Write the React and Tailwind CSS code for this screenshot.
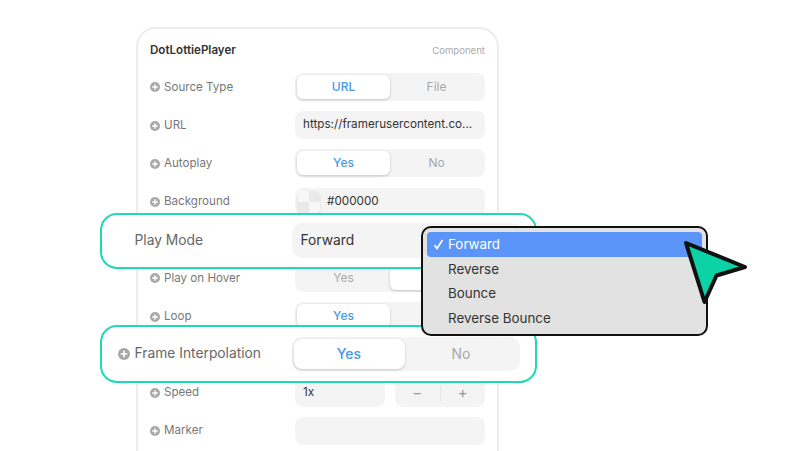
import React from "react";

const FONT = "font-['Inter','Liberation_Sans',sans-serif]";

function PlusDot({ big }) {
  const size = big ? "h-[12px] w-[12px]" : "h-[10px] w-[10px]";
  return (
    <svg viewBox="0 0 10 10" className={`${size} shrink-0`}>
      <circle cx="5" cy="5" r="5" fill="#a8a8a8" />
      <path d="M5 2.2v5.6M2.2 5h5.6" stroke="#fff" strokeWidth="1.4" />
    </svg>
  );
}

// two-part switch; `active` says which side holds the white pill
function Segment({ left, right, active = "left" }) {
  const pill = "rounded-[6px] bg-white text-[#4a98e6] font-medium shadow-[0_1px_3px_rgba(0,0,0,0.2)]";
  const idle = "text-[#a8a8a8]";
  return (
    <div className="flex h-full w-full rounded-[8px] bg-[#f4f4f4] p-[2px] text-[12px]">
      <div className={`flex flex-1 items-center justify-center ${active === "left" ? pill : idle}`}>{left}</div>
      <div className={`flex flex-1 items-center justify-center ${active === "right" ? pill : idle}`}>{right}</div>
    </div>
  );
}

function Field({ children }) {
  return (
    <div className="flex h-full w-full items-center rounded-[8px] bg-[#f4f4f4] px-2 text-[11.7px] text-[#333]">
      {children}
    </div>
  );
}

function Row({ label, children }) {
  return (
    <div className="flex h-[28px] items-center">
      <div className="flex w-[145px] shrink-0 items-center gap-[4px] pt-px text-[11.6px] text-[#777]">
        <PlusDot />
        {label}
      </div>
      <div className="h-full w-[190px] shrink-0">{children}</div>
    </div>
  );
}

function Dropdown() {
  const items = ["Forward", "Reverse", "Bounce", "Reverse Bounce"];
  return (
    <div className="absolute left-[421px] top-[226px] h-[110px] w-[287px] rounded-[10px] border-2 border-[#111] bg-[#e2e2e2] px-[4px] pt-[4px] text-[13.4px] text-[#333]">
      {items.map((item, i) => (
        <div
          key={item}
          className={`flex h-[24.6px] items-center pl-[21px] ${i === 0 ? "relative rounded-[4px] bg-[#5b95f9] text-white" : ""}`}
        >
          {i === 0 && (
            <svg className="absolute left-[6px]" width="11" height="11" viewBox="0 0 11 11">
              <path d="M1.5 6 L4 9.5 L9.5 1" fill="none" stroke="#fff" strokeWidth="1.7" />
            </svg>
          )}
          {item}
        </div>
      ))}
    </div>
  );
}

function Cursor() {
  return (
    <svg className="absolute left-[678px] top-[235px]" width="76" height="76" viewBox="0 0 76 76">
      <path
        d="M8 8 L67 32 L38.5 40.5 L26.5 67 Z"
        fill="#0bd3a7"
        stroke="#111"
        strokeWidth="4"
        strokeLinejoin="round"
      />
    </svg>
  );
}

export default function App() {
  return (
    <div className={`relative h-[451px] w-[801px] overflow-hidden bg-white ${FONT}`}>
      <div className="ml-[136px] pt-[27px]">
        <div className="h-[440px] w-[363px] rounded-t-[20px] border-2 border-[#eceeee] pl-[12px] pr-[12px]">
          <div className="flex h-[44px] items-center justify-between">
            <span className="text-[11.6px] font-semibold text-[#333]">DotLottiePlayer</span>
            <span className="text-[9.6px] text-[#aaa]">Component</span>
          </div>
          <div className="flex flex-col gap-[10.2px]">
            <Row label="Source Type"><Segment left="URL" right="File" /></Row>
            <Row label="URL"><Field>https://framerusercontent.co...</Field></Row>
            <Row label="Autoplay"><Segment left="Yes" right="No" /></Row>
            <Row label="Background">
              <Field>
                <div className="-ml-[5px] mr-[7px] grid h-[22px] w-[22px] grid-cols-2 overflow-hidden rounded-[5px] bg-white shadow-[0_1px_2px_rgba(0,0,0,0.15)]">
                  <div className="bg-[#f7f7f7]" />
                  <div className="bg-[#e9e9e9]" />
                  <div className="bg-[#e9e9e9]" />
                  <div className="bg-[#f7f7f7]" />
                </div>
                #000000
              </Field>
            </Row>
            {/* Play Mode row is drawn enlarged in the overlay below */}
            <div className="h-[28px]" />
            <Row label="Play on Hover"><Segment left="Yes" right="" active="right" /></Row>
            <Row label="Loop"><Segment left="Yes" right="" /></Row>
            {/* same for Frame Interpolation */}
            <div className="h-[28px]" />
            <Row label="Speed">
              <div className="flex h-full gap-[10px]">
                <div className="w-[90px]"><Field>1x</Field></div>
                <div className="flex w-[90px] items-center rounded-[8px] bg-[#f4f4f4] text-[15px] text-[#999]">
                  <span className="flex-1 border-r border-[#e6e6e6] text-center leading-[16px]">−</span>
                  <span className="flex-1 text-center leading-[16px]">+</span>
                </div>
              </div>
            </Row>
            <Row label="Marker"><Field /></Row>
          </div>
        </div>
      </div>

      {/* highlighted rows sit over the card */}
      <div className="absolute left-[99.5px] top-[212.5px] flex h-[56px] w-[437px] items-center rounded-[17px] border-2 border-[#1ed9b3] bg-white pl-[33px]">
        <span className="w-[157px] text-[13.8px] text-[#666]">Play Mode</span>
        <div className="flex h-[35px] w-[231px] items-center rounded-[10px] bg-[#f4f4f4] pl-[9px] text-[13.8px] text-[#333]">
          Forward
        </div>
      </div>
      <div className="absolute left-[99.5px] top-[324.5px] flex h-[58px] w-[437px] items-center rounded-[17px] border-2 border-[#1ed9b3] bg-white pl-[16px]">
        <div className="flex w-[174px] items-center gap-[5px] text-[13.8px] text-[#666]">
          <PlusDot big />
          Frame Interpolation
        </div>
        <div className="flex h-[34px] w-[228px] rounded-[10px] bg-[#f4f4f4] p-[2px] text-[14px]">
          <div className="flex w-[111px] shrink-0 items-center justify-center rounded-[8px] bg-white font-medium text-[#4a98e6] shadow-[0_1px_3px_rgba(0,0,0,0.2)]">
            Yes
          </div>
          <div className="flex flex-1 items-center justify-center text-[#a8a8a8]">No</div>
        </div>
      </div>

      <Dropdown />
      <Cursor />
    </div>
  );
}
